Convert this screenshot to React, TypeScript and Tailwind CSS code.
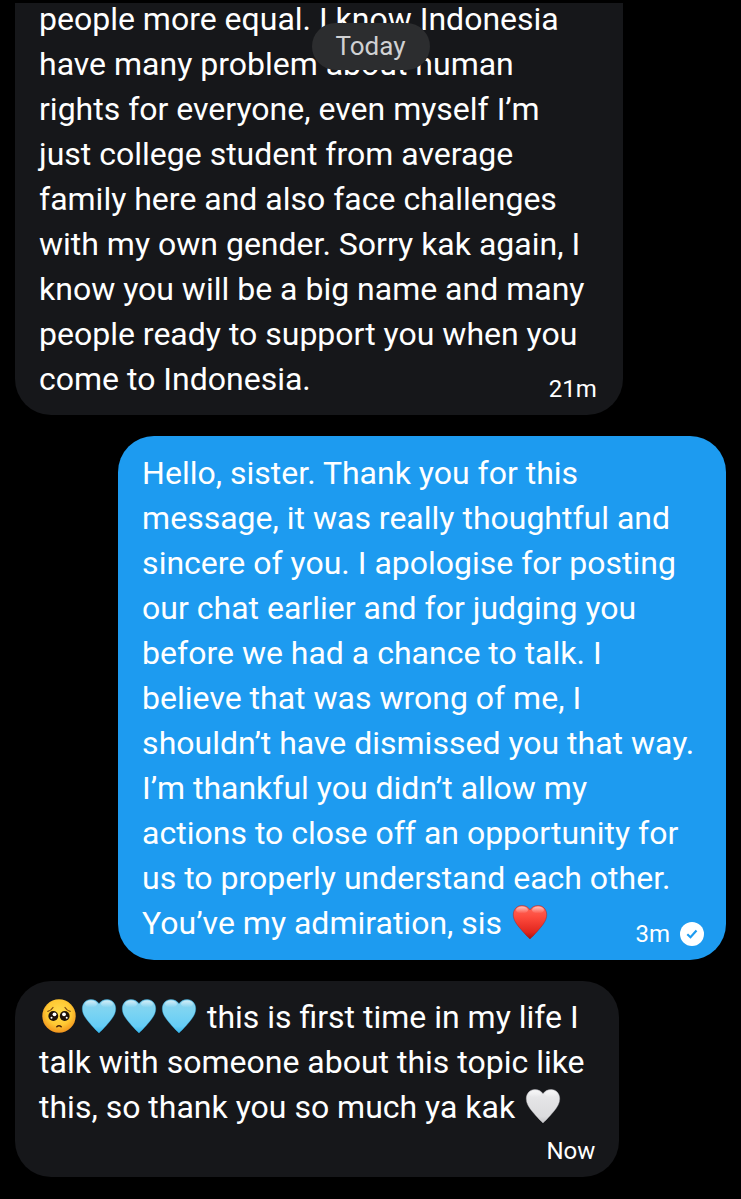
import { useId, type ReactNode } from "react";
import clsx from "clsx";

type HeartTone = "red" | "blue" | "white";

const heartStops: Record<HeartTone, [string, string, string, string]> = {
  red: ["#ff6a5c", "#fd4a3c", "#e0261e", "#a5120f"],
  blue: ["#8fd3ec", "#7cd4f2", "#66cdf6", "#35b5ec"],
  white: ["#ececee", "#e3e3e5", "#dcdcde", "#c4c4c7"],
};

const heartPath =
  "M17 34C16 33.200 10.500 27.500 6.500 22.700C2.800 18.300 0.300 14.300 0.300 9.800C0.300 4.400 4 0.500 8.800 0.500C12.300 0.500 15.300 2 17 4.800C18.700 2 21.700 0.500 25.200 0.500C30 0.500 33.700 4.400 33.700 9.800C33.700 14.300 31.200 18.300 27.500 22.700C23.500 27.500 18 33.200 17 34Z";

function Heart({ tone, label }: { tone: HeartTone; label: string }) {
  const id = useId();
  const [top, mid, low, edge] = heartStops[tone];
  return (
    <svg
      role="img"
      aria-label={label}
      viewBox="-3 0 40 34"
      className="inline-block h-[34px] w-10 align-[-5px]"
    >
      <defs>
        <linearGradient id={id} x1="0" y1="0" x2="0" y2="1">
          <stop offset="0" stopColor={top} />
          <stop offset="0.35" stopColor={mid} />
          <stop offset="0.8" stopColor={low} />
          <stop offset="1" stopColor={edge} />
        </linearGradient>
        <linearGradient id={`${id}-shine`} x1="0" y1="0" x2="0" y2="1">
          <stop offset="0" stopColor="#fff" stopOpacity="0.6" />
          <stop offset="1" stopColor="#fff" stopOpacity="0" />
        </linearGradient>
      </defs>
      <path d={heartPath} fill={`url(#${id})`} />
      <path
        d={heartPath}
        fill="none"
        stroke={edge}
        strokeWidth="1"
        opacity="0.4"
      />
      <ellipse cx="9" cy="5" rx="6" ry="3.500" fill={`url(#${id}-shine)`} />
      <ellipse cx="25" cy="5" rx="6" ry="3.500" fill={`url(#${id}-shine)`} />
    </svg>
  );
}

function PleadingFace() {
  const id = useId();
  return (
    <svg
      role="img"
      aria-label="Pleading face"
      viewBox="-3 0 40 34"
      className="inline-block h-[34px] w-10 align-[-5px]"
    >
      <defs>
        <radialGradient id={id} cx="0.5" cy="0.4" r="0.62">
          <stop offset="0" stopColor="#ffdc4e" />
          <stop offset="0.6" stopColor="#ffc933" />
          <stop offset="1" stopColor="#f08f1c" />
        </radialGradient>
      </defs>
      <circle cx="17" cy="17" r="16.700" fill={`url(#${id})`} />
      <circle cx="11.300" cy="17" r="4.900" fill="#1e1209" />
      <circle cx="22.700" cy="17" r="4.900" fill="#1e1209" />
      <circle cx="12.500" cy="15.300" r="1.900" fill="#fff" />
      <circle cx="22" cy="15.300" r="1.900" fill="#fff" />
      <circle cx="9.500" cy="18.800" r="1" fill="#fff" />
      <circle cx="24.700" cy="18.800" r="1" fill="#fff" />
      <path
        d="M5.800 12.300Q9.300 11.500 11 8.500M28.200 12.300Q24.700 11.500 23 8.500"
        stroke="#7a4510"
        strokeWidth="1.200"
        strokeLinecap="round"
        fill="none"
      />
      <path
        d="M14.800 27.800Q17 25.600 19.200 27.800"
        stroke="#4c2406"
        strokeWidth="1.500"
        strokeLinecap="round"
        fill="none"
      />
    </svg>
  );
}

function SentBadge() {
  return (
    <svg role="img" aria-label="Sent" viewBox="0 0 24 24" className="size-6">
      <circle cx="12" cy="12" r="12" fill="#fff" />
      <path
        d="M7.300 12.300L10.500 15.200L16.500 8.500"
        stroke="#1d9bf0"
        strokeWidth="2.200"
        fill="none"
      />
    </svg>
  );
}

function Bubble({
  className,
  children,
}: {
  className?: string;
  children: ReactNode;
}) {
  return (
    <article
      className={clsx(
        "relative flex flex-col px-6 text-[32px] leading-[45px] text-white",
        className
      )}
    >
      {children}
    </article>
  );
}

export default function App() {
  return (
    <main className="relative flex min-h-screen flex-col gap-[21px] bg-black px-[15px] pt-[3px] pb-[22px] font-['Roboto','Noto_Sans',sans-serif]">
      {/* Floating date marker over the thread */}
      <div className="absolute top-[23px] left-1/2 z-10 flex h-[47px] -translate-x-1/2 items-center rounded-full bg-[#2c2d2f] px-6 text-[26px] text-[#d0d1d3]">
        Today
      </div>

      <Bubble className="w-[85.5%] self-start rounded-b-[36px] bg-[#16171a] pb-[13px]">
        <p className="-mt-1.5 whitespace-pre">
          {`people more equal. I know Indonesia
have many problem about human
rights for everyone, even myself I’m
just college student from average
family here and also face challenges
with my own gender. Sorry kak again, I
know you will be a big name and many
people ready to support you when you
come to Indonesia.`}
        </p>
        <time className="absolute right-[26px] bottom-3 text-2xl leading-7">
          21m
        </time>
      </Bubble>

      <Bubble className="w-[85.5%] self-end rounded-[36px] bg-[#1d9bf0] pt-[15px] pb-3.5">
        <p className="whitespace-pre">
          {`Hello, sister. Thank you for this
message, it was really thoughtful and
sincere of you. I apologise for posting
our chat earlier and for judging you
before we had a chance to talk. I
believe that was wrong of me, I
shouldn’t have dismissed you that way.
I’m thankful you didn’t allow my
actions to close off an opportunity for
us to properly understand each other.
You’ve my admiration, sis `}
          <Heart tone="red" label="Red heart" />
        </p>
        <div className="absolute right-[22px] bottom-3 flex items-center gap-2.5 text-2xl leading-7">
          <time>3m</time>
          <SentBadge />
        </div>
      </Bubble>

      <Bubble className="w-[85%] self-start rounded-[36px] bg-[#16171a] pt-3.5 pb-3">
        <p className="whitespace-pre">
          <PleadingFace />
          <Heart tone="blue" label="Light blue heart" />
          <Heart tone="blue" label="Light blue heart" />
          <Heart tone="blue" label="Light blue heart" />
          {` this is first time in my life I
talk with someone about this topic like
this, so thank you so much ya kak `}
          <Heart tone="white" label="White heart" />
        </p>
        <time className="mt-[7px] self-end text-2xl leading-7">Now</time>
      </Bubble>
    </main>
  );
}
